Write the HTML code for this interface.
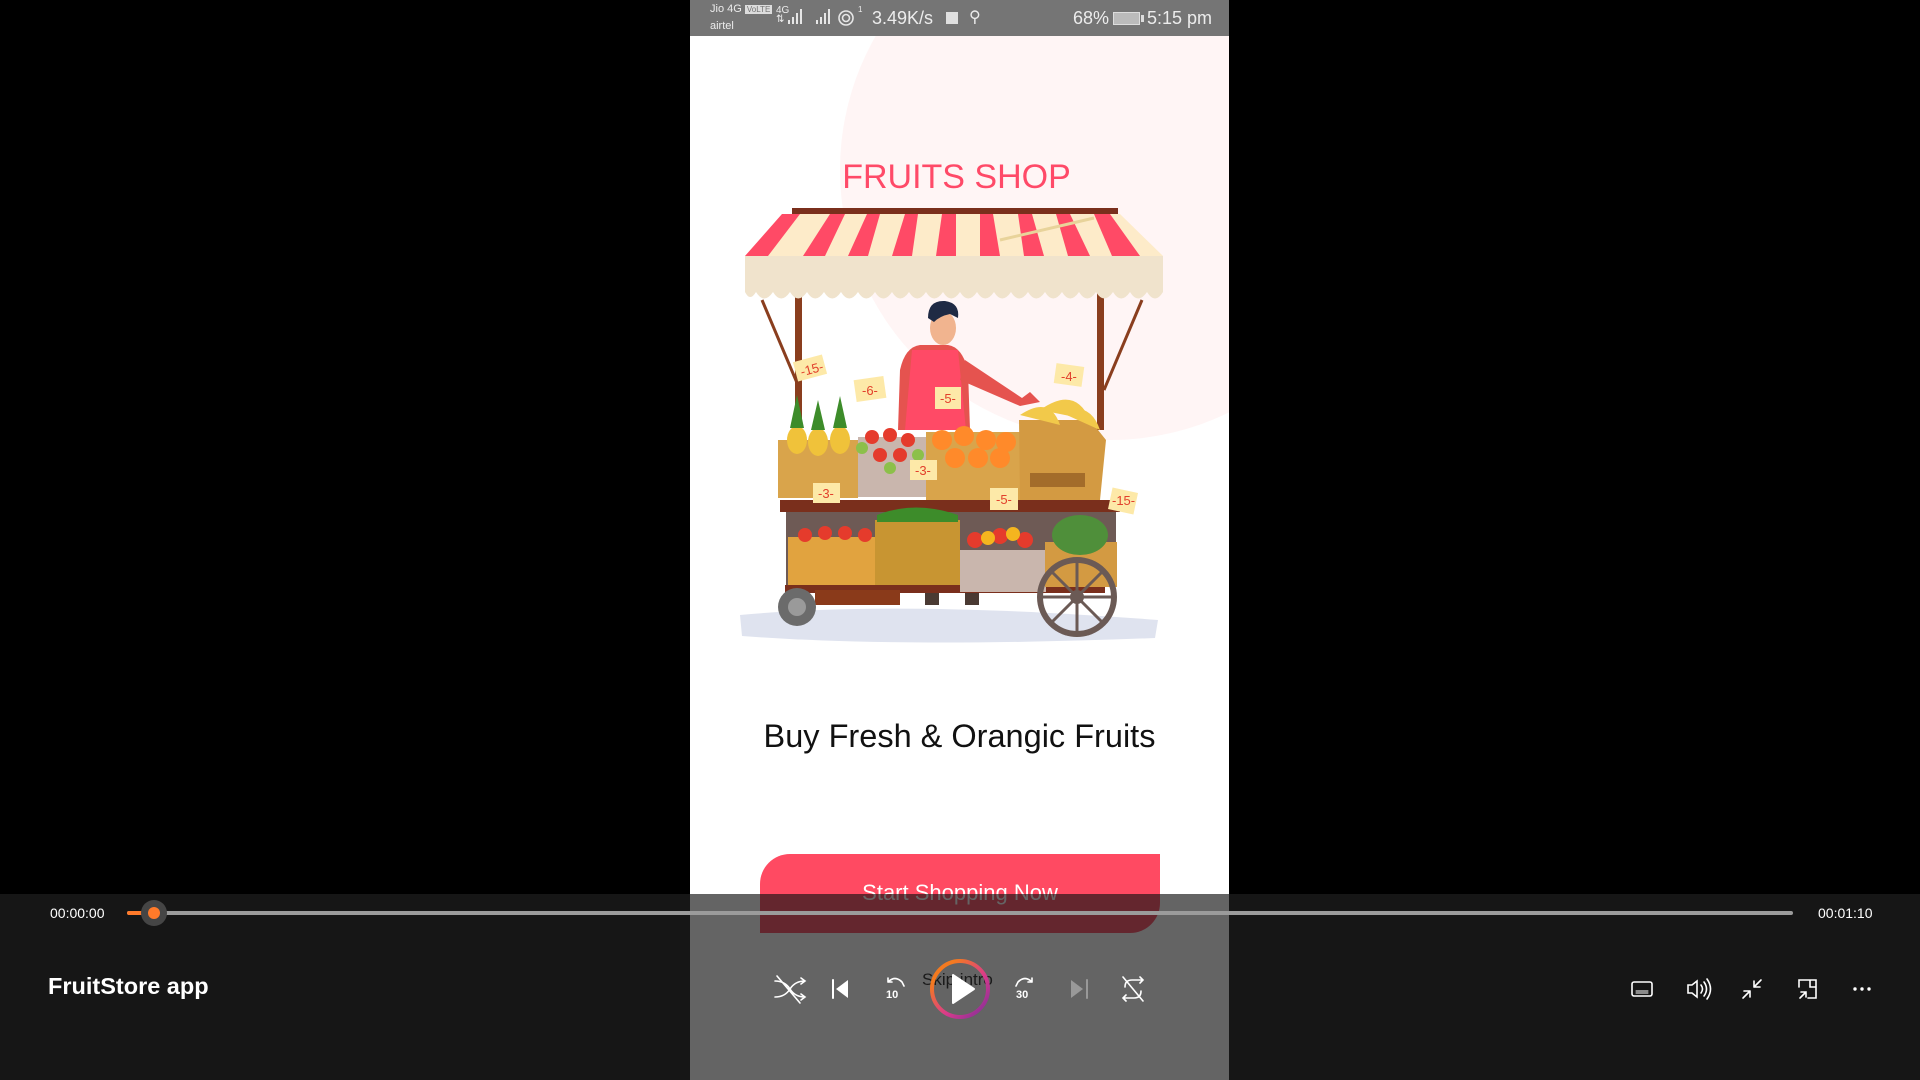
<!DOCTYPE html>
<html><head><meta charset="utf-8"><style>
*{margin:0;padding:0;box-sizing:border-box}
body{width:1920px;height:1080px;background:#000;position:relative;overflow:hidden;font-family:"Liberation Sans",sans-serif}
.phone{position:absolute;left:690px;top:0;width:539px;height:1080px;background:#fff;overflow:hidden}
.status{position:absolute;left:0;top:0;width:539px;height:36px;background:#757575;color:#ececec}
.bar{position:absolute;left:0;top:894px;width:1920px;height:186px;background:#161616}
.ov{position:absolute;left:690px;top:894px;width:539px;height:186px;background:rgba(20,20,20,0.66)}
.t{position:absolute;color:#fff;font-size:14px}
</style></head><body>
<div class="bar"></div>
<div class="phone">
  <svg width="539" height="1080" style="position:absolute;left:0;top:0">
    <circle cx="420" cy="170" r="270" fill="#fff5f5"/>
  </svg>
  <div class="status">
    <div style="position:absolute;left:20px;top:3px;font-size:11px">Jio 4G <span style="background:#ddd;color:#757575;font-size:8px;padding:0 2px">VoLTE</span></div>
    <div style="position:absolute;left:20px;top:20px;font-size:11px">airtel</div>
    <div style="position:absolute;left:86px;top:6px;font-size:10px;line-height:9px">4G<br>⇅</div>
    <svg style="position:absolute;left:98px;top:8px" width="70" height="18"><g fill="#e6e6e6"><rect x="0" y="12" width="2" height="4"/><rect x="4" y="9" width="2" height="7"/><rect x="8" y="5" width="2" height="11"/><rect x="12" y="1" width="2" height="15"/><rect x="28" y="12" width="2" height="4"/><rect x="32" y="9" width="2" height="7"/><rect x="36" y="5" width="2" height="11"/><rect x="40" y="1" width="2" height="15"/></g><g fill="none" stroke="#e6e6e6" stroke-width="1.6"><circle cx="58" cy="10" r="7"/><circle cx="58" cy="10" r="3.5"/></g></svg>
    <div style="position:absolute;left:168px;top:5px;font-size:8px">1</div>
    <div style="position:absolute;left:182px;top:8px;font-size:18px">3.49K/s</div>
    <div style="position:absolute;left:256px;top:12px;width:12px;height:12px;background:#e0e0e0"></div>
    <div style="position:absolute;left:279px;top:7px;font-size:16px">⚲</div>
    <div style="position:absolute;left:383px;top:8px;font-size:18px">68%</div>
    <div style="position:absolute;left:423px;top:12px;width:27px;height:13px;border:1.5px solid #ddd;background:#bbb"></div>
    <div style="position:absolute;left:451px;top:15px;width:3px;height:7px;background:#ddd"></div>
    <div style="position:absolute;left:457px;top:8px;font-size:18px">5:15 pm</div>
  </div>
  <div style="position:absolute;left:0;width:539px;top:158px;text-align:center;color:#ff4a68;font-size:34px;transform:translateX(-3px)">FRUITS SHOP</div>
  <svg width="539" height="520" viewBox="690 140 539 520" style="position:absolute;left:0;top:140px">
    <path d="M740 615 Q900 600 1158 620 L1155 638 Q900 648 742 636Z" fill="#dfe3ef"/>
    <rect x="795" y="290" width="7" height="140" fill="#8a3e1e"/>
    <rect x="1097" y="290" width="7" height="140" fill="#8a3e1e"/>
    <path d="M762 300 L800 390" stroke="#8a3e1e" stroke-width="3"/>
    <path d="M1142 300 L1104 390" stroke="#8a3e1e" stroke-width="3"/>
    <rect x="792" y="208" width="326" height="6" fill="#7a2f1c"/>
    <path d="M782 214 L1120 214 L1163 256 L745 256Z" fill="#fdebc9"/>
    <g fill="#ff4a66">
      <path d="M782 214 L800 214 L768 256 L745 256Z"/>
      <path d="M830 214 L845 214 L825 256 L803 256Z"/>
      <path d="M867 214 L880 214 L868 256 L848 256Z"/>
      <path d="M905 214 L918 214 L912 256 L892 256Z"/>
      <path d="M942 214 L956 214 L956 256 L936 256Z"/>
      <path d="M980 214 L993 214 L1000 256 L980 256Z"/>
      <path d="M1018 214 L1032 214 L1044 256 L1024 256Z"/>
      <path d="M1056 214 L1070 214 L1090 256 L1068 256Z"/>
      <path d="M1094 214 L1110 214 L1140 256 L1112 256Z"/>
    </g>
    <path d="M1000 240 L1094 218" stroke="#e8d39a" stroke-width="3"/>
    <path d="M745 256 L1163 256 L1163 292 Q1155 305 1147 292 Q1138 305 1130 292 Q1121 305 1113 292 Q1104 305 1096 292 Q1087 305 1079 292 Q1070 305 1062 292 Q1053 305 1045 292 Q1036 305 1028 292 Q1019 305 1011 292 Q1002 305 994 292 Q985 305 977 292 Q968 305 960 292 Q951 305 943 292 Q934 305 926 292 Q917 305 909 292 Q900 305 892 292 Q883 305 875 292 Q866 305 858 292 Q849 305 841 292 Q832 305 824 292 Q815 305 807 292 Q798 305 790 292 Q781 305 773 292 Q764 305 756 292 Q750 302 745 292Z" fill="#f0e3cc"/>
    <path d="M920 345 Q905 347 900 370 L898 430 L970 430 L968 370 Q962 347 948 345Z" fill="#e5534f"/>
    <path d="M912 350 L958 350 L966 430 L905 430Z" fill="#ff4a66"/>
    <path d="M965 360 L1022 398 L1030 392 L1040 402 L1020 406 L960 380Z" fill="#e5534f"/>
    <ellipse cx="943" cy="328" rx="13" ry="17" fill="#f1b48f"/>
    <path d="M928 318 Q928 300 945 301 Q960 303 958 318 L950 314 Q940 316 934 322Z" fill="#1f2a44"/>
    <rect x="925" y="555" width="14" height="50" fill="#4a3a33"/><rect x="965" y="555" width="14" height="50" fill="#4a3a33"/>
    <rect x="780" y="500" width="340" height="12" fill="#7a2f1c"/>
    <rect x="786" y="512" width="330" height="75" fill="#6e5a55"/>
    <rect x="785" y="585" width="320" height="8" fill="#7a2f1c"/>
    <rect x="815" y="590" width="85" height="15" fill="#8a3a1a"/>
    <rect x="778" y="440" width="80" height="58" fill="#d9a44b"/>
    <g fill="#f0c23a"><ellipse cx="797" cy="440" rx="10" ry="14"/><ellipse cx="818" cy="442" rx="10" ry="14"/><ellipse cx="840" cy="440" rx="10" ry="14"/></g>
    <g fill="#3d8c2a"><path d="M790 428 L797 395 L804 428Z"/><path d="M811 430 L818 400 L825 430Z"/><path d="M833 428 L840 396 L847 428Z"/></g>
    <rect x="858" y="437" width="68" height="60" fill="#c9b6ad"/>
    <g fill="#e53b2c"><circle cx="872" cy="437" r="7"/><circle cx="890" cy="435" r="7"/><circle cx="908" cy="440" r="7"/><circle cx="880" cy="455" r="7"/><circle cx="900" cy="455" r="7"/></g>
    <g fill="#8cc04a"><circle cx="862" cy="448" r="6"/><circle cx="918" cy="455" r="6"/><circle cx="890" cy="468" r="6"/></g>
    <rect x="926" y="432" width="95" height="68" fill="#d9a44b"/>
    <g fill="#ff8a2a"><circle cx="942" cy="440" r="10"/><circle cx="964" cy="436" r="10"/><circle cx="986" cy="440" r="10"/><circle cx="1006" cy="442" r="10"/><circle cx="955" cy="458" r="10"/><circle cx="978" cy="458" r="10"/><circle cx="1000" cy="458" r="10"/></g>
    <path d="M1019 420 L1090 420 L1106 440 L1100 500 L1020 500Z" fill="#d39a42"/>
    <g fill="#f2c94a"><path d="M1020 415 Q1050 395 1060 425Z"/><path d="M1040 410 Q1075 385 1090 420Z"/><path d="M1060 412 Q1090 400 1100 430Z"/></g>
    <rect x="1030" y="473" width="55" height="14" fill="#a36c2a"/>
    <rect x="788" y="537" width="90" height="48" fill="#e1a33f"/>
    <g fill="#e53b2c"><circle cx="805" cy="535" r="7"/><circle cx="825" cy="533" r="7"/><circle cx="845" cy="533" r="7"/><circle cx="865" cy="535" r="7"/></g>
    <rect x="875" y="520" width="85" height="65" fill="#c89532"/>
    <path d="M877 515 Q915 500 958 515 L958 522 L877 522Z" fill="#3d8c2a"/>
    <rect x="960" y="550" width="86" height="42" fill="#c9b6ad"/>
    <g fill="#e53b2c"><circle cx="975" cy="540" r="8"/><circle cx="1000" cy="536" r="8"/><circle cx="1025" cy="540" r="8"/></g>
    <g fill="#f4b51f"><circle cx="988" cy="538" r="7"/><circle cx="1013" cy="534" r="7"/></g>
    <rect x="1045" y="542" width="72" height="45" fill="#d39a42"/>
    <ellipse cx="1080" cy="535" rx="28" ry="20" fill="#4f8f3a"/>
    <g fill="#fde9a8">
      <rect x="795" y="358" width="30" height="20" transform="rotate(-15 810 368)"/>
      <rect x="855" y="378" width="30" height="22" transform="rotate(-8 870 389)"/>
      <rect x="935" y="387" width="26" height="22"/>
      <rect x="1055" y="365" width="28" height="20" transform="rotate(8 1069 375)"/>
      <rect x="813" y="483" width="27" height="20"/>
      <rect x="910" y="460" width="27" height="20"/>
      <rect x="990" y="488" width="28" height="22"/>
      <rect x="1110" y="490" width="26" height="22" transform="rotate(12 1123 501)"/>
    </g>
    <g fill="#e2402c" font-size="13" font-family="Liberation Sans,sans-serif">
      <text x="800" y="374" transform="rotate(-15 810 368)">-15-</text>
      <text x="862" y="395">-6-</text><text x="940" y="403">-5-</text>
      <text x="1061" y="381">-4-</text><text x="818" y="498">-3-</text>
      <text x="915" y="475">-3-</text><text x="996" y="504">-5-</text><text x="1112" y="505">-15-</text>
    </g>
    <circle cx="797" cy="607" r="19" fill="#6b6b6b"/><circle cx="797" cy="607" r="9" fill="#9a9a9a"/>
    <circle cx="1077" cy="597" r="37" fill="none" stroke="#6b5a55" stroke-width="6"/>
    <g stroke="#6b5a55" stroke-width="3"><path d="M1077 560 L1077 634 M1040 597 L1114 597 M1051 571 L1103 623 M1103 571 L1051 623"/></g>
    <circle cx="1077" cy="597" r="7" fill="#6b5a55"/>
  </svg>
  <div style="position:absolute;left:0;width:539px;top:718px;text-align:center;font-size:32.5px;color:#111">Buy Fresh &amp; Orangic Fruits</div>
  <div style="position:absolute;left:70px;top:854px;width:400px;height:79px;background:#ff4a62;border-radius:30px 0 30px 0;color:#fff;font-size:22px;text-align:center;line-height:78px">Start Shopping Now</div>
</div>
<div class="ov"></div>
<div style="position:absolute;left:127px;top:911px;width:1666px;height:4px;background:#9b9b9b;border-radius:2px"></div>
<div style="position:absolute;left:127px;top:911px;width:27px;height:4px;background:#ff7a2a;border-radius:2px"></div>
<div style="position:absolute;left:141px;top:900px;width:26px;height:26px;background:#454545;border-radius:50%"></div>
<div style="position:absolute;left:148px;top:907px;width:12px;height:12px;background:#ff7a2a;border-radius:50%"></div>
<div class="t" style="left:50px;top:905px">00:00:00</div>
<div class="t" style="left:1818px;top:905px">00:01:10</div>
<div style="position:absolute;left:48px;top:973px;color:#fff;font-size:23.5px;font-weight:bold">FruitStore app</div>
<div style="position:absolute;left:922px;top:970px;color:#1a1a1a;font-size:17px">Skip intro</div>
<svg width="1920" height="186" style="position:absolute;left:0;top:894px" fill="none" stroke="#fff" stroke-width="1.6" stroke-linecap="round">
  <defs><linearGradient id="g" x1="0" y1="0" x2="1" y2="1"><stop offset="0.2" stop-color="#f47a20"/><stop offset="0.6" stop-color="#d93a8c"/><stop offset="1" stop-color="#7b2d9a"/></linearGradient></defs>
  <path d="M775 87 Q785 87 790 95 Q795 103 805 103 M775 103 Q785 103 790 95 M790 95 Q795 87 805 87 M801 84 L805 87 L801 90 M801 100 L805 103 L801 106 M777 82 L800 109"/>
  <path d="M833 86 L833 104" stroke-width="2"/><path d="M848 86 L836 95 L848 104Z" fill="#fff" stroke="none"/>
  <path d="M888 88 Q895 81 902 88 L904 92 M888 88 L888 84 M888 88 L892 88"/>
  <text x="886" y="104" fill="#fff" stroke="none" font-size="11" font-family="Liberation Sans,sans-serif" font-weight="bold">10</text>
  <circle cx="960" cy="95" r="28" stroke="url(#g)" stroke-width="4"/>
  <path d="M953 81 L974 95 L953 109Z" fill="#fff" stroke="#fff" stroke-linejoin="round" stroke-width="2"/>
  <path d="M1032 88 Q1025 81 1018 88 L1016 92 M1032 88 L1032 84 M1032 88 L1028 88"/>
  <text x="1016" y="104" fill="#fff" stroke="none" font-size="11" font-family="Liberation Sans,sans-serif" font-weight="bold">30</text>
  <path d="M1071 86 L1083 95 L1071 104Z" fill="#999" stroke="none"/><path d="M1087 86 L1087 104" stroke="#999" stroke-width="2"/>
  <path d="M1125 93 Q1125 86 1132 86 L1143 86 M1140 83 L1143 86 L1140 89 M1141 97 Q1141 104 1134 104 L1123 104 M1126 101 L1123 104 L1126 107 M1123 83 L1143 107"/>
  <rect x="1632" y="88" width="20" height="14" rx="2"/><path d="M1636 97 L1648 97 M1636 99 L1648 99" stroke-width="1"/>
  <path d="M1688 91 L1692 91 L1697 87 L1697 103 L1692 99 L1688 99Z M1701 91 Q1704 95 1701 99 M1704 88 Q1709 95 1704 102 M1707 85 Q1714 95 1707 105"/>
  <path d="M1743 104 L1750 97 M1750 97 L1744 97 M1750 97 L1750 103 M1761 86 L1754 93 M1754 93 L1760 93 M1754 93 L1754 87"/>
  <path d="M1799 93 L1799 86 L1810 86 M1810 86 L1816 86 L1816 104 L1808 104 M1810 86 L1810 93 L1816 93 M1800 104 L1806 98 M1801 98 L1806 98 L1806 103"/>
  <g fill="#fff" stroke="none"><circle cx="1855" cy="95" r="1.7"/><circle cx="1862" cy="95" r="1.7"/><circle cx="1869" cy="95" r="1.7"/></g>
</svg>
</body></html>
